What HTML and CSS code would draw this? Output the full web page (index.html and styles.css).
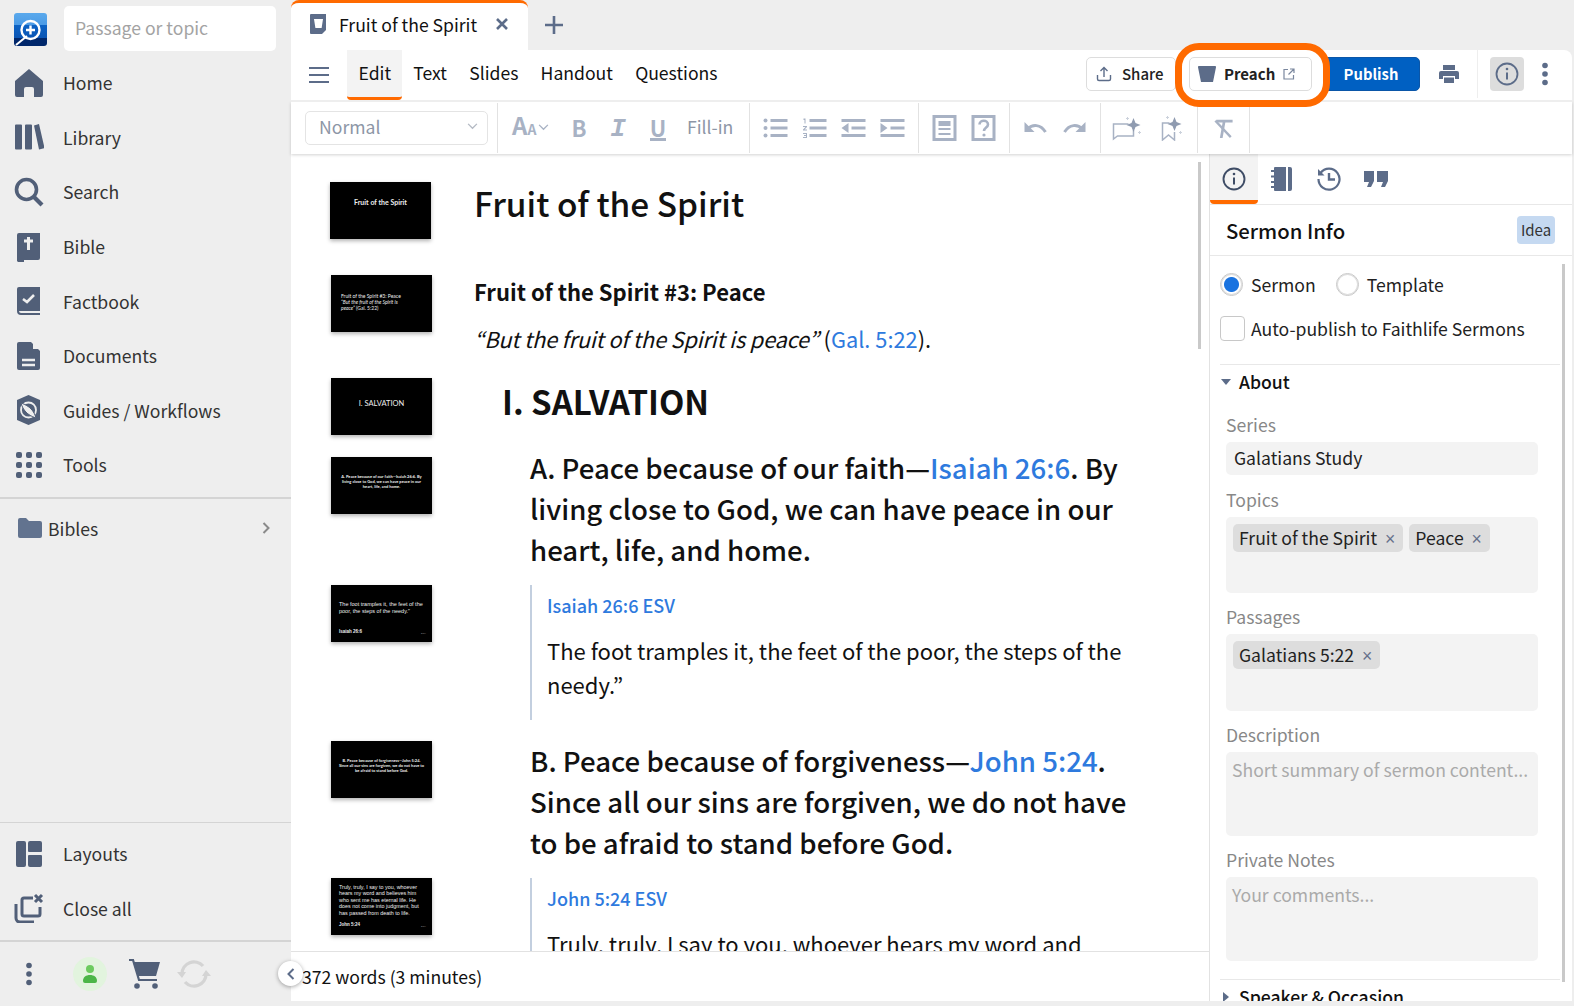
FILE: index.html
```html
<!DOCTYPE html>
<html lang="en">
<head>
  <meta charset="UTF-8">
  <title>Fruit of the Spirit</title>
  <link rel="stylesheet" href="styles.css">
</head>
<body>
  <div class="app">
    <aside class="sidebar">
      <div class="side-top">
        <svg class="logo" viewBox="0 0 33 33">
          <defs><linearGradient id="lg" x1="0" y1="0" x2="0" y2="1"><stop offset="0" stop-color="#5aa9ec"/><stop offset=".36" stop-color="#4b9be6"/><stop offset=".37" stop-color="#0c62c4"/><stop offset=".76" stop-color="#0a55b4"/><stop offset=".77" stop-color="#00276b"/><stop offset="1" stop-color="#00276b"/></linearGradient></defs>
          <rect width="33" height="33" rx="3" fill="url(#lg)"/>
          <path d="M13 23 2 32" stroke="#fff" stroke-width="2"/>
          <circle cx="16.500" cy="17" r="9" fill="none" stroke="#fff" stroke-width="2.400"/>
          <path d="M16.500 12.500v9M12 17h9" stroke="#fff" stroke-width="2.400"/>
        </svg>
        <div class="search-box">Passage or topic</div>
      </div>
      <nav class="nav">
        <a class="nav-item"><svg class="nav-icon" viewBox="0 0 30 30"><path d="M15 1 1 13v14a2 2 0 0 0 2 2h7v-8a2 2 0 0 1 2-2h6a2 2 0 0 1 2 2v8h7a2 2 0 0 0 2-2V13z"/></svg>Home</a>
        <a class="nav-item"><svg class="nav-icon" viewBox="0 0 30 30"><path d="M1 3.500a1 1 0 0 1 1-1h5a1 1 0 0 1 1 1v23a1 1 0 0 1-1 1H2a1 1 0 0 1-1-1zM11 3.500a1 1 0 0 1 1-1h5a1 1 0 0 1 1 1v23a1 1 0 0 1-1 1h-5a1 1 0 0 1-1-1zM20 3.500 25 2l5.500 24-5.500 1.500z"/></svg>Library</a>
        <a class="nav-item"><svg class="nav-icon" viewBox="0 0 30 30"><circle cx="12.500" cy="12.500" r="10" fill="none" stroke="#515f78" stroke-width="3.600"/><path d="m20 20 8 8" stroke="#515f78" stroke-width="4.200"/></svg>Search</a>
        <a class="nav-item"><svg class="nav-icon" viewBox="0 0 30 30"><path d="M5 1a2 2 0 0 0-2 2v26l1 1h6v-2h14a2 2 0 0 0 2-2V1z"/><path d="M14.500 5v13M10 9h9" stroke="#eee" stroke-width="3"/></svg>Bible</a>
        <a class="nav-item"><svg class="nav-icon" viewBox="0 0 30 30"><path d="M5 1a2 2 0 0 0-2 2v22h23V1z"/><path d="m9 13 4 3 7-7" fill="none" stroke="#eee" stroke-width="2.600"/><path d="M3 25a4 4 0 0 0 4 4h19v-2H7a2 2 0 0 1 0-4z"/></svg>Factbook</a>
        <a class="nav-item"><svg class="nav-icon" viewBox="0 0 30 30"><path d="M5 1a2 2 0 0 0-2 2v24a2 2 0 0 0 2 2h19a2 2 0 0 0 2-2V10l-9-9z"/><path d="M8 19h13M8 24h13" stroke="#eee" stroke-width="2.400"/><path d="M19 1v7h7z" fill="#eee"/></svg>Documents</a>
        <a class="nav-item"><svg class="nav-icon" viewBox="0 0 30 30"><path d="M14.500 0 26 5v20l-11.500 5L3 25V5z"/><circle cx="14.500" cy="15" r="7.500" fill="none" stroke="#eee" stroke-width="1.800"/><path d="M7 8c2 7 6 12 15 15-2-7-6-12-15-15z" fill="#eee" stroke="#515f78"/></svg>Guides / Workflows</a>
        <a class="nav-item"><svg class="nav-icon" viewBox="0 0 30 30"><rect x="2" y="2" width="6" height="6" rx="2"/><rect x="12" y="2" width="6" height="6" rx="2"/><rect x="22" y="2" width="6" height="6" rx="2"/><rect x="2" y="12" width="6" height="6" rx="2"/><rect x="12" y="12" width="6" height="6" rx="2"/><rect x="22" y="12" width="6" height="6" rx="2"/><rect x="2" y="22" width="6" height="6" rx="2"/><rect x="12" y="22" width="6" height="6" rx="2"/><rect x="22" y="22" width="6" height="6" rx="2"/></svg>Tools</a>
      </nav>
      <div class="folders">
        <a class="folder">
          <svg class="folder-icon" viewBox="0 0 24 20"><path d="M0 2a2 2 0 0 1 2-2h6l3 3h11a2 2 0 0 1 2 2v13a2 2 0 0 1-2 2H2a2 2 0 0 1-2-2z"/></svg>
          <span>Bibles</span>
          <svg class="folder-arrow" viewBox="0 0 8 12"><path d="m1.500 1 5 5-5 5" fill="none" stroke="#8a8a8a" stroke-width="2"/></svg>
        </a>
      </div>
      <div class="side-bottom">
        <a class="nav-item"><svg class="nav-icon" viewBox="0 0 30 30"><path d="M4 2h6a2 2 0 0 1 2 2v22a2 2 0 0 1-2 2H4a2 2 0 0 1-2-2V4a2 2 0 0 1 2-2zM16 2h10a2 2 0 0 1 2 2v8a1 1 0 0 1-1 1H15a1 1 0 0 1-1-1V4a2 2 0 0 1 2-2zM15 16h12a1 1 0 0 1 1 1v9a2 2 0 0 1-2 2H16a2 2 0 0 1-2-2v-9a1 1 0 0 1 1-1z"/></svg>Layouts</a>
        <a class="nav-item"><svg class="nav-icon" viewBox="0 0 30 30"><path d="M2 11v14a4 4 0 0 0 4 4h14" fill="none" stroke="#515f78" stroke-width="3"/><path d="M19 5H10a2 2 0 0 0-2 2v14a2 2 0 0 0 2 2h14a2 2 0 0 0 2-2v-7" fill="none" stroke="#515f78" stroke-width="3"/><path d="m21 2 7 7m0-7-7 7" stroke="#515f78" stroke-width="3"/></svg>Close all</a>
      </div>
      <div class="side-status">
        <svg class="more" viewBox="0 0 6 24"><circle cx="3" cy="3.500" r="2.800"/><circle cx="3" cy="12" r="2.800"/><circle cx="3" cy="20.500" r="2.800"/></svg>
        <div class="avatar"><svg viewBox="0 0 14 20" width="14" height="20"><circle cx="7" cy="5" r="4" fill="#6ccb5f"/><path d="M0 17c0-4 3-6 7-6s7 2 7 6a2 2 0 0 1-2 2H2a2 2 0 0 1-2-2z" fill="#4cb648"/></svg></div>
        <svg class="cart" viewBox="0 0 32 30"><path d="M4 3h27l-4 14H9z"/><path d="M0 1h4l6 20h18" fill="none" stroke="#515f78" stroke-width="2.200"/><circle cx="8" cy="27" r="2.800"/><circle cx="26" cy="27" r="2.800"/></svg>
        <svg class="sync" viewBox="0 0 34 30"><path d="M5 15A12 12 0 0 1 26 7M29 15A12 12 0 0 1 8 23" fill="none" stroke="#d4d4d4" stroke-width="3.400"/><path d="M0 13h9l-4 6zM34 17h-9l4-6z" fill="#d4d4d4"/></svg>
      </div>
    </aside>

    <main class="main">
      <div class="tabbar">
        <div class="tab">
          <svg class="tab-icon" viewBox="0 0 17 20"><path d="M1 0h15v16l-4 4H1a1 1 0 0 1-1-1V1a1 1 0 0 1 1-1z" fill="#5c6c89"/><path d="M4 5h9l-1.400 9H5.400z" fill="#fff"/></svg>
          <span>Fruit of the Spirit</span>
          <svg class="tab-close" viewBox="0 0 14 14"><path d="m2 2 10 10m0-10L2 12" stroke="#5c6c89" stroke-width="2.600"/></svg>
        </div>
        <svg class="tab-add" viewBox="0 0 18 18"><path d="M9 0v18M0 9h18" stroke="#5c6c89" stroke-width="2.600"/></svg>
      </div>

      <div class="menubar">
        <svg class="burger" viewBox="0 0 20 18"><path d="M0 2h20M0 9h20M0 16h20" stroke="#5c6c89" stroke-width="2.200"/></svg>
        <a class="menu-item active">Edit</a>
        <a class="menu-item">Text</a>
        <a class="menu-item">Slides</a>
        <a class="menu-item">Handout</a>
        <a class="menu-item">Questions</a>
        <div class="actions">
          <button class="btn share">
            <svg viewBox="0 0 16 16" width="16" height="16"><path d="M8 11V2M4.500 5 8 1.500 11.500 5M1.500 9v4a1.500 1.500 0 0 0 1.500 1.500h10a1.500 1.500 0 0 0 1.500-1.500V9" fill="none" stroke="#5c6c89" stroke-width="1.400"/></svg>
            Share
          </button>
          <div class="preach-wrap">
            <button class="btn preach">
              <svg viewBox="0 0 18 16" width="18" height="16"><path d="M1 0h16a1 1 0 0 1 1 1.200L15 16H3L0 1.200A1 1 0 0 1 1 0z" fill="#5c6c89"/></svg>
              Preach
              <svg viewBox="0 0 12 12" width="12" height="12"><path d="M5 1.500H1v9.500h9.500V7M7 1h4v4M11 1 5.500 6.500" fill="none" stroke="#7a879e" stroke-width="1.200"/></svg>
            </button>
          </div>
          <button class="btn publish">Publish</button>
          <svg class="print" viewBox="0 0 20 18"><path d="M4 0h12v5H4zM2 6h16a2 2 0 0 1 2 2v6h-4v-3H4v3H0V8a2 2 0 0 1 2-2zM5 12.500h10V18H5z" fill="#5c6c89"/></svg>
          <div class="action-sep"></div>
          <div class="info-btn"><svg viewBox="0 0 24 24" width="24" height="24"><circle cx="12" cy="12" r="10.500" fill="none" stroke="#5c6c89" stroke-width="1.800"/><path d="M12 10.500v7" stroke="#5c6c89" stroke-width="2"/><circle cx="12" cy="7" r="1.300" fill="#5c6c89"/></svg></div>
          <svg class="action-more" viewBox="0 0 6 24"><circle cx="3" cy="3.500" r="2.800"/><circle cx="3" cy="12" r="2.800"/><circle cx="3" cy="20.500" r="2.800"/></svg>
        </div>
      </div>

      <div class="toolbar">
        <div class="tool-group first">
          <div class="select"><span>Normal</span><svg viewBox="0 0 12 8" width="11" height="7"><path d="m1 1 5 5 5-5" fill="none" stroke="#b4bac4" stroke-width="1.500"/></svg></div>
        </div>
        <div class="tool-group fmt">
          <span class="tool aa">A<small>A</small><svg viewBox="0 0 12 8" width="11" height="7"><path d="m1 1 5 5 5-5" fill="none" stroke="#a8b2c4" stroke-width="1.500"/></svg></span>
          <span class="tool fb">B</span>
          <span class="tool fi">I</span>
          <span class="tool fu"><span>U</span></span>
          <span class="tool fill">Fill-in</span>
        </div>
        <div class="tool-group">
          <svg class="tool-svg" viewBox="0 0 24 20"><circle cx="2" cy="2.500" r="2"/><circle cx="2" cy="10" r="2"/><circle cx="2" cy="17.500" r="2"/><path d="M7 1h17v3H7zM7 8.500h17v3H7zM7 16h17v3H7z"/></svg>
          <svg class="tool-svg" viewBox="0 0 24 20"><path d="M7 1h17v3H7zM7 8.500h17v3H7zM7 16h17v3H7zM1 .5h2v5H2V2H1zM.5 8h4v1l-2.500 2.500h2.500v1h-4v-1L3 9H.5zM.5 15h4v5h-4v-1h3v-1h-2v-1h2v-1h-3z"/></svg>
          <svg class="tool-svg" viewBox="0 0 24 20"><path d="M0 1h24v3H0zM0 16h24v3H0zM10 8.500h14v3H10zM0 10l7-5v10z"/></svg>
          <svg class="tool-svg" viewBox="0 0 24 20"><path d="M0 1h24v3H0zM0 16h24v3H0zM10 8.500h14v3H10zM7 10 0 5v10z"/></svg>
        </div>
        <div class="tool-group">
          <svg class="tool-svg big" viewBox="0 0 24 26"><path d="M1.500 1.500h21v23h-21z" fill="none" stroke="#a8b2c4" stroke-width="3"/><path d="M6 6h12v5H6zM6 13h12v2H6zM6 18h12v2H6z"/></svg>
          <svg class="tool-svg big" viewBox="0 0 24 26"><path d="M1.500 1.500h21v23h-21z" fill="none" stroke="#a8b2c4" stroke-width="3"/><path d="M8 9.500c0-5 8.500-5 8.500 0 0 3-4 3-4 6.500" fill="none" stroke="#a8b2c4" stroke-width="2.600"/><circle cx="12.500" cy="20" r="1.600"/></svg>
        </div>
        <div class="tool-group">
          <svg class="tool-svg" viewBox="0 0 24 20"><path d="M1 4v10h10z"/><path d="M4 11c5-5 13-5 18 3" fill="none" stroke="#a8b2c4" stroke-width="3"/></svg>
          <svg class="tool-svg" viewBox="0 0 24 20"><path d="M23 4v10H13z"/><path d="M20 11c-5-5-13-5-18 3" fill="none" stroke="#a8b2c4" stroke-width="3"/></svg>
        </div>
        <div class="tool-group wide">
          <svg class="tool-svg big" viewBox="0 0 30 26"><path d="M17 9H2v15l4-3h16v-6" fill="none" stroke="#a8b2c4" stroke-width="1.500"/><path class="spark" d="m22 3 2 5 5 2-5 2-2 5-2-5-5-2 5-2z"/><path d="M16 2v3M14.500 3.500h3M28 16v3M26.500 17.500h3" stroke="#ccd2dc"/></svg>
          <svg class="tool-svg big" viewBox="0 0 24 26"><path d="M10 8H3v17l6-5 6 5v-8" fill="none" stroke="#a8b2c4" stroke-width="1.500"/><path class="spark" d="m15 2 2 5 5 2-5 2-2 5-2-5-5-2 5-2z"/><path d="M8 1v3M6.500 2.500h3M21 16v3M19.500 17.500h3" stroke="#ccd2dc"/></svg>
        </div>
        <div class="tool-group">
          <svg class="tool-svg" viewBox="0 0 24 22"><path d="M4 2h18v3H14l-3 17H8l3-17H4z"/><path d="m3 3 17 18" stroke="#a8b2c4" stroke-width="2.600"/></svg>
        </div>
      </div>

      <div class="work">
        <section class="editor">
          <div class="doc">
            <div class="row row-title">
              <div class="slide slide-title">Fruit of the Spirit</div>
              <h1 class="doc-title">Fruit of the Spirit</h1>
            </div>
            <div class="row row-intro">
              <div class="slide slide-small">Fruit of the Spirit #3: Peace<br><i>“But the fruit of the Spirit is peace”</i> (Gal. 5:22)</div>
              <div class="intro-text">
                <h3 class="doc-sub">Fruit of the Spirit #3: Peace</h3>
                <p class="doc-quote"><i>“But the fruit of the Spirit is peace”</i> (<a>Gal. 5:22</a>).</p>
              </div>
            </div>
            <div class="row row-h1">
              <div class="slide slide-center">I. SALVATION</div>
              <h2 class="doc-h1">I. SALVATION</h2>
            </div>
            <div class="row row-a">
              <div class="slide slide-bold">A. Peace because of our faith—Isaiah 26:6. By living close to God, we can have peace in our heart, life, and home.</div>
              <h3 class="doc-h2">A. Peace because of our faith—<a>Isaiah 26:6</a>. By living close to God, we can have peace in our heart, life, and home.</h3>
            </div>
            <div class="row row-isa">
              <div class="slide slide-verse"><span>The foot tramples it, the feet of the poor, the steps of the needy.”</span><b>Isaiah 26:6</b><small>ESV</small></div>
              <blockquote class="verse">
                <a class="verse-ref">Isaiah 26:6 ESV</a>
                <p>The foot tramples it, the feet of the poor, the steps of the needy.”</p>
              </blockquote>
            </div>
            <div class="row row-b">
              <div class="slide slide-bold">B. Peace because of forgiveness—John 5:24. Since all our sins are forgiven, we do not have to be afraid to stand before God.</div>
              <h3 class="doc-h2">B. Peace because of forgiveness—<a>John 5:24</a>. Since all our sins are forgiven, we do not have to be afraid to stand before God.</h3>
            </div>
            <div class="row row-john">
              <div class="slide slide-verse long"><span>Truly, truly, I say to you, whoever hears my word and believes him who sent me has eternal life. He does not come into judgment, but has passed from death to life.</span><b>John 5:24</b><small>ESV</small></div>
              <blockquote class="verse">
                <a class="verse-ref">John 5:24 ESV</a>
                <p>Truly, truly, I say to you, whoever hears my word and believes him who sent me has eternal life.</p>
              </blockquote>
            </div>
            <div class="doc-scroll"></div>
          </div>
          <footer class="doc-foot">372 words (3 minutes)</footer>
          <button class="collapse"><svg viewBox="0 0 8 12" width="8" height="12"><path d="M6.500 1 1.500 6l5 5" fill="none" stroke="#5c6c89" stroke-width="2"/></svg></button>
        </section>

        <aside class="info">
          <div class="info-tabs">
            <div class="info-tab active"><svg viewBox="0 0 24 24" width="24" height="24"><circle cx="12" cy="12" r="10.500" fill="none" stroke="#3f4d66" stroke-width="1.900"/><path d="M12 10.500v7" stroke="#3f4d66" stroke-width="2"/><circle cx="12" cy="7" r="1.300" fill="#3f4d66"/></svg></div>
            <div class="info-tab"><svg viewBox="0 0 22 24" width="22" height="24"><path d="M4 0h11v24H4a1 1 0 0 1-1-1V1a1 1 0 0 1 1-1zM17 0h2a2 2 0 0 1 2 2v20a2 2 0 0 1-2 2h-2z" fill="#5c6c89"/><path d="M0 4h5M0 9.500h5M0 15h5M0 20h5" stroke="#5c6c89" stroke-width="2"/></svg></div>
            <div class="info-tab"><svg viewBox="0 0 24 24" width="24" height="24"><path d="M3.500 6A10.500 10.500 0 1 1 1.500 12" fill="none" stroke="#5c6c89" stroke-width="2.200"/><path d="M1 2v6.500h6.500z" fill="#5c6c89"/><path d="M12 6v6.500h6" fill="none" stroke="#5c6c89" stroke-width="2.400"/></svg></div>
            <div class="info-tab"><svg viewBox="0 0 24 16" width="24" height="16"><path d="M0 0h10v10l-3 6H3l2-5H0zM13 0h11v10l-3 6h-4l2-5h-6z" fill="#5c6c89"/></svg></div>
          </div>
          <div class="info-head">
            <h2>Sermon Info</h2>
            <span class="badge">Idea</span>
          </div>
          <div class="info-body">
            <div class="radios">
              <label class="radio"><span class="radio-dot on"></span>Sermon</label>
              <label class="radio"><span class="radio-dot"></span>Template</label>
            </div>
            <label class="check"><span class="check-box"></span>Auto-publish to Faithlife Sermons</label>
            <div class="sect-head"><span class="caret down"></span>About</div>
            <div class="field loose">
              <div class="field-label">Series</div>
              <div class="input single">Galatians Study</div>
            </div>
            <div class="field loose">
              <div class="field-label">Topics</div>
              <div class="input tags">
                <span class="chip">Fruit of the Spirit <em>×</em></span>
                <span class="chip">Peace <em>×</em></span>
              </div>
            </div>
            <div class="field">
              <div class="field-label">Passages</div>
              <div class="input tags tall">
                <span class="chip">Galatians 5:22 <em>×</em></span>
              </div>
            </div>
            <div class="field">
              <div class="field-label">Description</div>
              <div class="input area">Short summary of sermon content...</div>
            </div>
            <div class="field">
              <div class="field-label">Private Notes</div>
              <div class="input area">Your comments...</div>
            </div>
            <div class="sect-head"><span class="caret right"></span>Speaker &amp; Occasion</div>
          </div>
          <div class="info-scroll"></div>
        </aside>
      </div>
    </main>
  </div>
</body>
</html>
```

FILE: styles.css
```css
* {
  margin: 0;
  padding: 0;
  box-sizing: border-box;
}
html, body {
  height: 100%;
  overflow: hidden;
}
body {
  font-family: "Noto Sans CJK JP", "Noto Sans", sans-serif;
  background: #eee;
  color: #111;
}
a {
  color: inherit;
}
.app {
  display: flex;
  height: 1006px;
}

/* left sidebar */
.sidebar {
  width: 291px;
  flex: none;
  display: flex;
  flex-direction: column;
  height: 100%;
  color: #333;
}
.side-top {
  height: 56px;
  display: flex;
  align-items: flex-start;
  padding: 6px 15px 0 14px;
}
.logo {
  width: 33px;
  height: 33px;
  margin-top: 7px;
}
.search-box {
  margin-left: 17px;
  width: 212px;
  height: 45px;
  background: #fff;
  border-radius: 5px;
  color: #a3a3a3;
  font-size: 17.600px;
  line-height: 43px;
  padding-left: 11px;
}
.nav {
  height: 443px;
  border-bottom: 2px solid #d4d4d4;
}
.nav-item {
  display: flex;
  align-items: center;
  height: 54.6px;
  font-size: 17.600px;
  padding: 0 0 1px 14px;
}
.nav-icon {
  width: 30px;
  height: 30px;
  margin-right: 19px;
  fill: #515f78;
  flex: none;
}
.folders {
  flex: 1;
  padding-top: 2px;
}
.folder {
  display: flex;
  align-items: center;
  height: 54px;
  font-size: 17.600px;
  padding-left: 18px;
}
.folder span {
  flex: 1;
  margin-left: 6px;
}
.folder-icon {
  width: 24px;
  height: 20px;
  fill: #62738f;
}
.folder-arrow {
  width: 8px;
  height: 12px;
  margin-right: 21px;
}
.side-bottom {
  height: 120px;
  border-top: 1px solid #d4d4d4;
  border-bottom: 2px solid #d4d4d4;
  padding-top: 4px;
}
.side-status {
  height: 64px;
  display: flex;
  align-items: center;
  position: relative;
  padding-left: 26px;
}
.more {
  width: 6px;
  height: 24px;
  fill: #515f78;
}
.avatar {
  width: 34px;
  height: 34px;
  margin-left: 41px;
  border-radius: 50%;
  background: #e2f4de;
  display: flex;
  align-items: center;
  justify-content: center;
}
.cart {
  width: 32px;
  height: 30px;
  margin-left: 22px;
  fill: #515f78;
}
.sync {
  width: 34px;
  height: 30px;
  margin-left: 16px;
}

/* main white area */
.main {
  flex: 1;
  min-width: 0;
  display: flex;
  flex-direction: column;
  height: 1001px;
  margin-right: 2px;
}
.tabbar {
  height: 50px;
  display: flex;
  align-items: center;
  flex: none;
}
.tab {
  width: 237px;
  height: 50px;
  background: #fff;
  border-top: 3px solid #ff6a00;
  border-radius: 8px 8px 0 0;
  display: flex;
  align-items: center;
  padding: 0 19px 5px 19px;
  font-size: 17.600px;
}
.tab span {
  flex: 1;
  margin-left: 12px;
}
.tab-icon {
  width: 17px;
  height: 20px;
}
.tab-close {
  width: 14px;
  height: 14px;
}
.tab-add {
  width: 18px;
  height: 18px;
  margin-left: 17px;
}
.menubar {
  height: 52px;
  flex: none;
  background: #fff;
  border-bottom: 2px solid #eee;
  border-radius: 0 8px 0 0;
  display: flex;
  align-items: center;
  padding-left: 18px;
  font-size: 17.600px;
  position: relative;
  z-index: 3;
}
.burger {
  width: 20px;
  height: 18px;
  margin-right: 18.400px;
}
.menu-item {
  height: 50px;
  line-height: 46px;
  padding: 0 11.100px;
  border-bottom: 3px solid transparent;
}
.menu-item.active {
  background: #f3f3f3;
  border-bottom-color: #ff6a00;
  border-radius: 0 0 4px 4px;
}
.actions {
  margin-left: auto;
  display: flex;
  align-items: center;
  height: 100%;
  padding-bottom: 2px;
}
.btn {
  height: 34px;
  display: flex;
  align-items: center;
  gap: 8px;
  font-family: inherit;
  font-size: 15px;
  font-weight: 700;
  line-height: 30px;
  color: #222;
  background: #fff;
  border: 1px solid #ddd;
  border-radius: 5px;
  white-space: nowrap;
}
.share {
  width: 90px;
  padding-left: 9px;
  margin-right: 13px;
  gap: 10px;
  font-weight: 500;
}
.preach-wrap {
  position: relative;
  z-index: 1;
}
.preach-wrap::before {
  content: "";
  position: absolute;
  left: -14px;
  right: -18px;
  top: -14px;
  bottom: -16px;
  background: #fff;
  border: 7px solid #ff6a00;
  border-radius: 24px;
}
.preach {
  position: relative;
  width: 123px;
  padding-left: 8px;
}
.publish {
  width: 110px;
  margin-left: -2px;
  padding-left: 12px;
  justify-content: center;
  background: #0060c2;
  border-color: #0a56a8;
  color: #fff;
  font-size: 14.800px;
}
.print {
  width: 20px;
  height: 18px;
  margin-left: 19px;
}
.action-sep {
  width: 1px;
  height: 48px;
  background: #eee;
  margin-left: 18px;
}
.info-btn {
  width: 34px;
  height: 34px;
  margin-left: 12px;
  border-radius: 4px;
  background: #ddd;
  display: flex;
  align-items: center;
  justify-content: center;
}
.action-more {
  width: 6px;
  height: 24px;
  margin: 0 24px 0 18px;
  fill: #5c6c89;
}
.toolbar {
  height: 52px;
  flex: none;
  background: #fff;
  display: flex;
  align-items: center;
  box-shadow: 0 1px 3px rgba(0, 0, 0, .18);
  position: relative;
  z-index: 2;
}
.tool-group {
  height: 50px;
  border-right: 1px solid #e2e2e2;
  display: flex;
  align-items: center;
  padding: 0 6px;
}
.tool-group.first {
  width: 207px;
  padding: 0 8px 0 14px;
}
.tool-group.fmt {
  width: 252px;
  padding: 0 0 0 14px;
}
.tool-group.wide {
  width: 97px;
  justify-content: space-between;
}
.select {
  width: 183px;
  height: 34px;
  border: 1px solid #e4e4e4;
  border-radius: 5px;
  display: flex;
  align-items: center;
  justify-content: space-between;
  padding: 0 9px 3px 13px;
  font-size: 17.600px;
  color: #8d96a6;
}
.tool {
  color: #a8b2c4;
  font-weight: 700;
  font-size: 22px;
  line-height: 30px;
  text-align: center;
  margin-top: -2px;
}
.aa {
  width: 46px;
  font-size: 24px;
  display: flex;
  align-items: baseline;
}
.aa small {
  font-size: 14px;
}
.aa svg {
  margin-left: 2px;
  align-self: center;
}
.fb {
  width: 38px;
  margin-left: 2px;
}
.fi {
  width: 40px;
  margin-top: 1px;
  font-family: "Liberation Mono", monospace;
  font-style: italic;
  font-size: 26px;
}
.fu {
  width: 40px;
}
.fu span {
  display: inline-block;
  line-height: 22px;
  border-bottom: 3px solid #a8b2c4;
}
.fill {
  margin-left: 9px;
  font-size: 17.600px;
  font-weight: 400;
  color: #8d96a6;
  white-space: nowrap;
}
.tool-svg {
  width: 39px;
  height: 20px;
  fill: #a8b2c4;
}
.tool-svg.big {
  height: 26px;
}
.tool-svg .spark {
  fill: #8f9bb0;
}
.work {
  flex: 1;
  min-height: 0;
  display: flex;
  background: #fff;
}

/* document */
.editor {
  width: 918px;
  flex: none;
  display: flex;
  flex-direction: column;
  position: relative;
}
.doc {
  flex: 1;
  min-height: 0;
  overflow: hidden;
  position: relative;
  padding-left: 40px;
}
.row {
  display: flex;
  align-items: flex-start;
}
.slide {
  width: 101px;
  height: 57px;
  flex: none;
  background: #000;
  color: #eee;
  font-size: 5px;
  line-height: 1.2;
  box-shadow: 0 2px 4px rgba(0, 0, 0, .3);
  font-family: "Lato", sans-serif;
}
.slide-title {
  margin-left: -1px;
  margin-right: 43px;
  padding-top: 16px;
  text-align: center;
  font-weight: 700;
  font-size: 7px;
}
.slide-small {
  padding: 18px 30px 0 10px;
}
.slide-center {
  text-align: center;
  font-size: 7.500px;
  padding-top: 21px;
}
.slide-bold {
  padding: 18px 7px 0;
  text-align: center;
  font-size: 4px;
  font-weight: 700;
}
.slide-verse {
  padding: 16px 7px 0 8px;
  font-size: 5.500px;
  font-family: "Liberation Sans", sans-serif;
  position: relative;
}
.slide-verse span {
  display: block;
}
.slide-verse b {
  position: absolute;
  left: 8px;
  bottom: 8px;
  font-size: 4.500px;
}
.slide-verse small {
  position: absolute;
  right: 6px;
  bottom: 7px;
  font-size: 2.500px;
  color: #888;
}
.slide-verse.long {
  padding-top: 6px;
  font-size: 5.400px;
}
.row-title {
  padding-top: 28px;
}
.doc-title {
  font-size: 33.400px;
  font-weight: 500;
  line-height: 44px;
  margin-top: -1px;
}
.row-intro {
  margin-top: 36px;
  column-gap: 42px;
}
.intro-text {
  margin-top: -1px;
}
.doc-sub {
  font-size: 22px;
  font-weight: 700;
  line-height: 34px;
}
.doc-quote {
  font-size: 21.800px;
  line-height: 34px;
  margin-top: 14px;
}
.doc-quote i {
  letter-spacing: -.2px;
}
.doc-quote a, .doc-h2 a, .verse-ref {
  color: #2e7ade;
}
.row-h1 {
  margin-top: 22px;
  column-gap: 70px;
}
.doc-h1 {
  font-size: 33px;
  font-weight: 700;
  line-height: 50px;
  margin-top: -2px;
}
.row-a {
  margin-top: 22px;
  column-gap: 98px;
}
.row-b {
  margin-top: 21px;
  column-gap: 98px;
}
.doc-h2 {
  font-size: 27.600px;
  font-weight: 500;
  line-height: 41px;
  width: 605px;
  margin-top: -1px;
}
.row-a .doc-h2 {
  margin-top: -10px;
}
.row-isa {
  margin-top: 15px;
  column-gap: 98px;
}
.row-john {
  margin-top: 15px;
  column-gap: 98px;
}
.verse {
  border-left: 2px solid #c3cfdf;
  padding: 6px 0 19px 15px;
  width: 605px;
}
.verse-ref {
  display: block;
  font-size: 18px;
  font-weight: 500;
  line-height: 28px;
}
.verse p {
  font-size: 22px;
  line-height: 34px;
  margin-top: 14px;
}
.doc-scroll {
  position: absolute;
  left: 907px;
  top: 8px;
  width: 3px;
  height: 187px;
  background: #c9c9c9;
}
.doc-foot {
  height: 50px;
  flex: none;
  background: #fff;
  border-top: 1px solid #e2e2e2;
  padding-left: 11px;
  font-size: 17.600px;
  line-height: 49px;
  position: relative;
}
.collapse {
  position: absolute;
  left: -13px;
  bottom: 15px;
  width: 25px;
  height: 25px;
  background: #fff;
  border: none;
  border-radius: 50%;
  box-shadow: 0 1px 4px rgba(0, 0, 0, .35);
  display: flex;
  align-items: center;
  justify-content: center;
}

/* info panel */
.info {
  flex: 1;
  min-width: 0;
  border-left: 1px solid #e2e2e2;
  position: relative;
  overflow: hidden;
}
.info-tabs {
  display: flex;
  height: 51px;
  border-bottom: 1px solid #e8e8e8;
}
.info-tab {
  width: 47px;
  height: 50px;
  display: flex;
  align-items: center;
  justify-content: center;
}
.info-tab.active {
  width: 48px;
  padding-top: 4px;
  background: #f3f3f3;
  border-bottom: 4px solid #ff6a00;
  border-radius: 0 0 4px 4px;
}
.info-head {
  height: 51px;
  display: flex;
  align-items: center;
  justify-content: space-between;
  padding: 0 17px 0 16px;
  border-bottom: 1px solid #e8e8e8;
}
.info-head h2 {
  font-size: 20.300px;
  font-weight: 500;
}
.badge {
  width: 38px;
  height: 28px;
  background: #c5d9f1;
  border-radius: 4px;
  font-size: 15px;
  line-height: 27px;
  text-align: center;
  color: #333;
}
.info-body {
  padding: 0 18px 0 10px;
}
.radios {
  display: flex;
  gap: 20px;
  height: 56px;
  align-items: center;
  font-size: 17.600px;
  color: #222;
}
.radio {
  display: flex;
  align-items: center;
  gap: 8px;
}
.radio-dot {
  width: 23px;
  height: 23px;
  border: 1px solid #c8c8c8;
  border-radius: 50%;
  background: #fff;
  box-shadow: inset 0 0 0 1px #ddd;
}
.radio-dot.on {
  background: radial-gradient(circle, #1a73e0 0 7px, #fff 8px);
}
.check {
  display: flex;
  align-items: center;
  gap: 6px;
  font-size: 17.600px;
  color: #222;
  height: 36px;
  margin-top: -2px;
  white-space: nowrap;
}
.check-box {
  width: 25px;
  height: 25px;
  border: 1px solid #c8c8c8;
  border-radius: 4px;
}
.sect-head {
  font-size: 17.600px;
  font-weight: 500;
  display: flex;
  align-items: center;
  gap: 7px;
  margin: 18px -6px 0 0;
  padding-bottom: 2px;
  white-space: nowrap;
  height: 36px;
  border-top: 1px solid #e8e8e8;
}
.caret {
  width: 0;
  height: 0;
  border-style: solid;
}
.caret.down {
  margin: 0 1px;
  border-width: 6px 5px 0;
  border-color: #5c6c89 transparent transparent;
}
.caret.right {
  margin: 0 3px;
  border-width: 5px 0 5px 6px;
  border-color: transparent transparent transparent #5c6c89;
}
.field {
  padding-left: 6px;
  margin-top: 11px;
}
.field.loose {
  margin-top: 12px;
}
.field-label {
  font-size: 17.600px;
  line-height: 25px;
  color: #888;
}
.input {
  width: 312px;
  background: #f3f3f3;
  border-radius: 5px;
  margin-top: 5px;
  font-size: 17.600px;
  color: #222;
}
.input.single {
  height: 33px;
  line-height: 32px;
  padding-left: 8px;
}
.input.tags {
  height: 76px;
  padding: 7px;
  display: flex;
  align-items: flex-start;
  gap: 6px;
}
.input.tags.tall {
  height: 77px;
}
.input.area {
  height: 84px;
  padding: 5px 6px;
  color: #aaa;
  white-space: nowrap;
}
.chip {
  height: 28px;
  line-height: 27px;
  background: #ddd;
  border-radius: 5px;
  padding: 0 8px 0 6px;
  white-space: nowrap;
}
.chip em {
  font-family: "Liberation Sans", sans-serif;
  font-style: normal;
  color: #66708a;
  margin-left: 4px;
}
.info-scroll {
  position: absolute;
  right: 7px;
  top: 110px;
  width: 3px;
  height: 718px;
  background: #c9c9c9;
}
```
